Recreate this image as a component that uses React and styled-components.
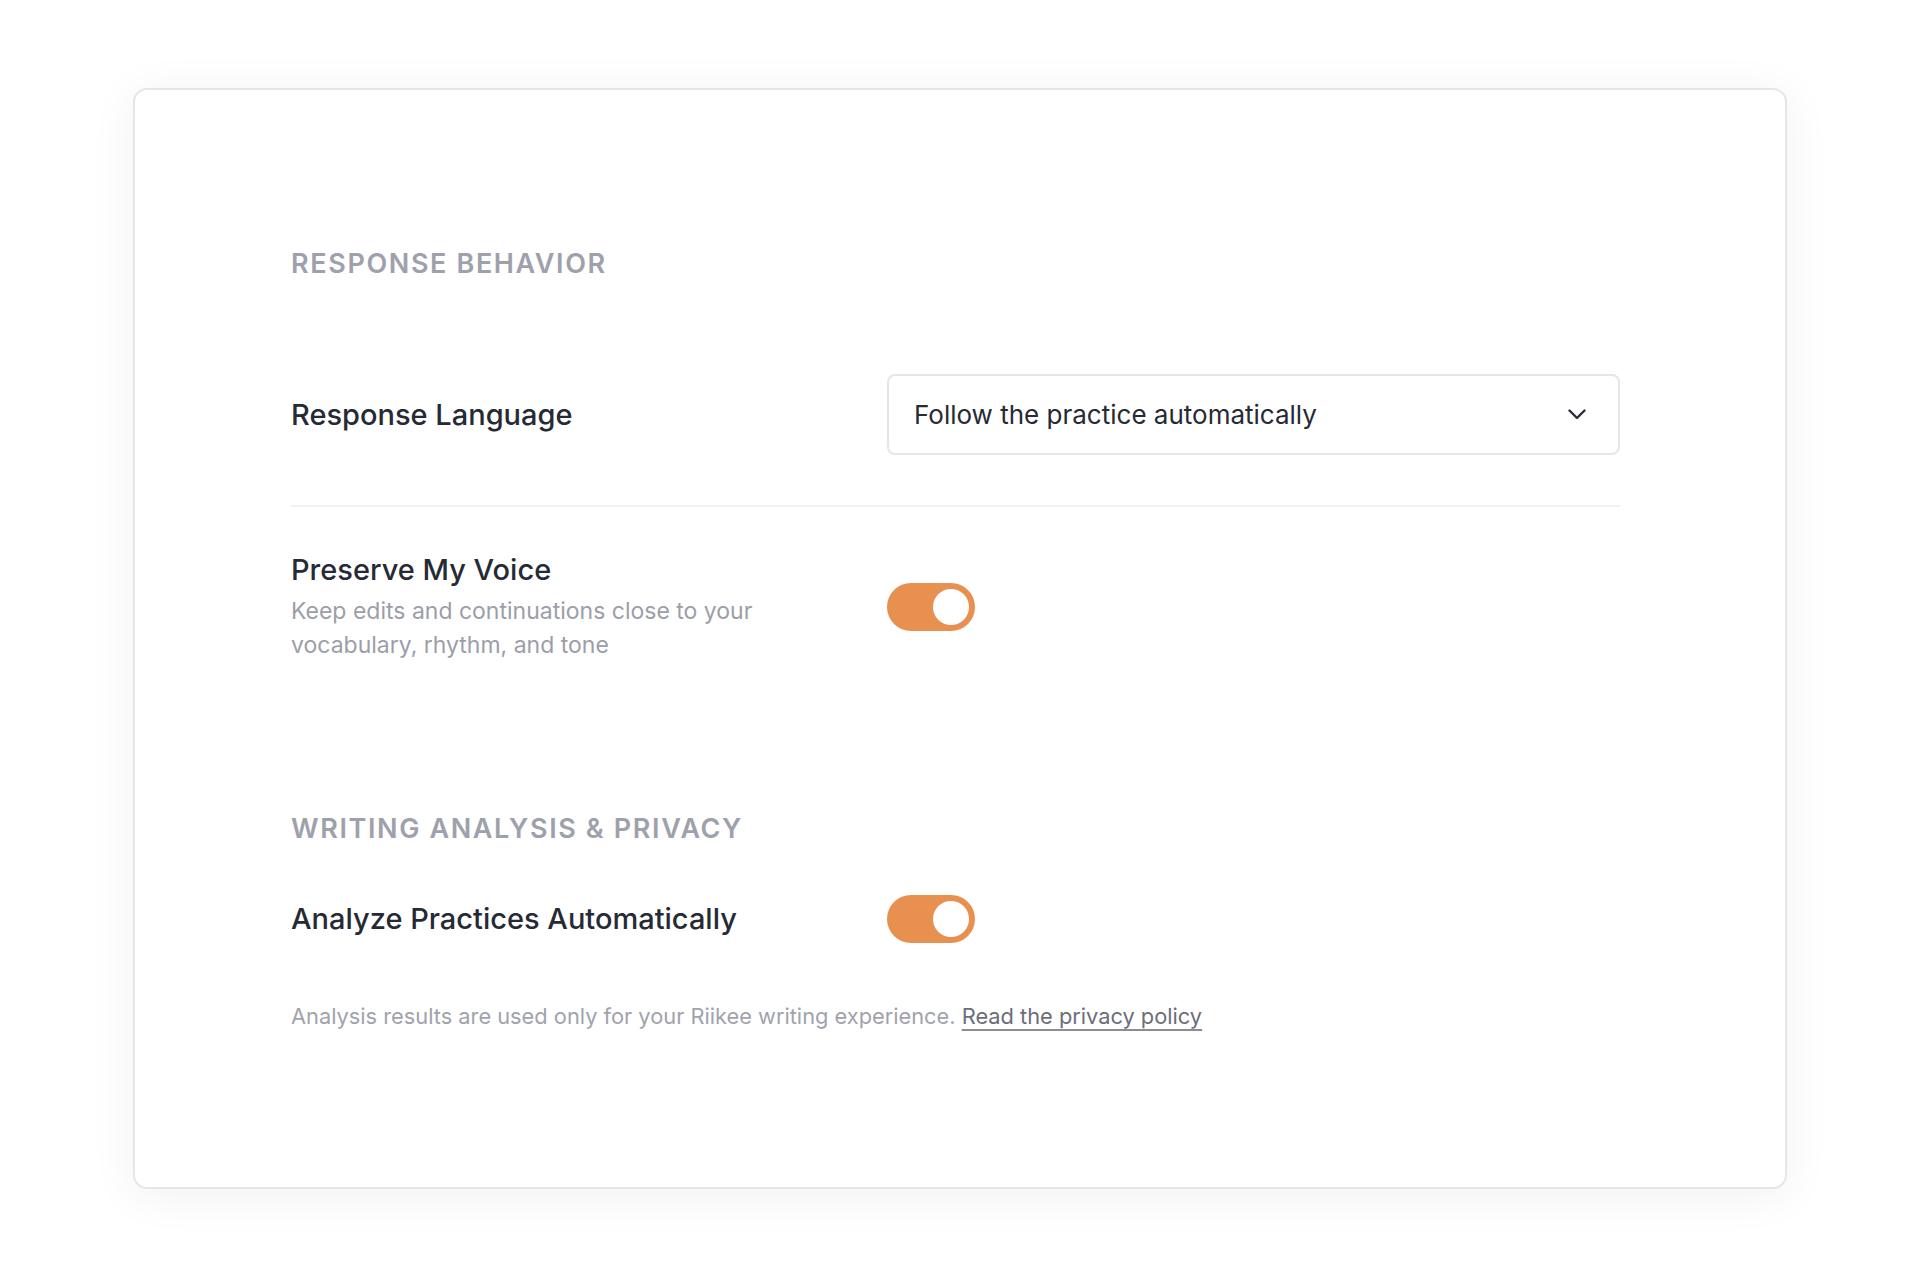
import { useState } from 'react';
import styled, { createGlobalStyle } from 'styled-components';

const GlobalStyle = createGlobalStyle`
  html, body {
    margin: 0;
    padding: 0;
    background: #ffffff;
  }
  body {
    font-family: Inter, "Noto Sans", "Liberation Sans", sans-serif;
    -webkit-font-smoothing: antialiased;
  }
  * {
    box-sizing: border-box;
  }
`;

const Toggle = ({ checked, onChange }) => (
  <Switch type="button" $on={checked} onClick={() => onChange(!checked)}>
    <Knob $on={checked} />
  </Switch>
);

const Chevron = () => (
  <svg width="18" height="11" viewBox="0 0 18 11" fill="none">
    <path
      d="M1.5 1.5L9 9L16.5 1.5"
      stroke="#2a2d36"
      strokeWidth="2.4"
      strokeLinecap="round"
      strokeLinejoin="round"
    />
  </svg>
);

const App = () => {
  const [preserveVoice, setPreserveVoice] = useState(true);
  const [autoAnalyze, setAutoAnalyze] = useState(true);

  return (
    <Page>
      <GlobalStyle />
      <Card>
        <Section>
          <SectionTitle>Response Behavior</SectionTitle>
          <Row $pad="48px 0 50px" $divider>
            <Label>Response Language</Label>
            <Select type="button">
              <span>Follow the practice automatically</span>
              <Chevron />
            </Select>
          </Row>
          <Row $pad="44px 0 52px">
            <div>
              <Label>Preserve My Voice</Label>
              <Description>
                Keep edits and continuations close to your vocabulary, rhythm, and tone
              </Description>
            </div>
            <Toggle checked={preserveVoice} onChange={setPreserveVoice} />
          </Row>
        </Section>

        <Section $spaced>
          <SectionTitle $tight>Writing Analysis &amp; Privacy</SectionTitle>
          <Row $pad="0">
            <Label>Analyze Practices Automatically</Label>
            <Toggle checked={autoAnalyze} onChange={setAutoAnalyze} />
          </Row>
          <Footnote>
            Analysis results are used only for your Riikee writing experience.{' '}
            <PolicyLink href="#">Read the privacy policy</PolicyLink>
          </Footnote>
        </Section>
      </Card>
    </Page>
  );
};

export default App;

const Page = styled.main`
  width: 1920px;
  min-height: 1280px;
  padding-top: 88px;
`;

const Card = styled.div`
  width: 1654px;
  margin: 0 auto;
  padding: 158px 165px 154px 156px;
  background: #ffffff;
  border: 2px solid #e6e6e9;
  border-radius: 14px;
  box-shadow: 0 6px 48px rgba(20, 20, 30, 0.06);
`;

const Section = styled.section`
  margin-top: ${(p) => (p.$spaced ? '99px' : '0')};
`;

const SectionTitle = styled.h2`
  margin: 0 0 ${(p) => (p.$tight ? '50px' : '46px')};
  font-size: 27px;
  line-height: 32px;
  font-weight: 600;
  letter-spacing: 0.06em;
  text-transform: uppercase;
  color: #9ea1ac;
`;

const Row = styled.div`
  display: grid;
  grid-template-columns: 596px 733px;
  align-items: center;
  padding: ${(p) => p.$pad || '48px 0'};
  border-bottom: ${(p) => (p.$divider ? '2px solid #f1f1f3' : 'none')};
`;

const Label = styled.div`
  font-size: 29px;
  line-height: 38px;
  font-weight: 500;
  color: #262a35;
`;

const Description = styled.p`
  margin: 5px 0 0;
  max-width: 520px;
  font-size: 23px;
  line-height: 34px;
  font-weight: 400;
  color: #9b9ea9;
`;

const Select = styled.button`
  display: flex;
  align-items: center;
  justify-content: space-between;
  width: 733px;
  height: 81px;
  padding: 0 32px 0 25px;
  background: #ffffff;
  border: 2px solid #e6e6e9;
  border-radius: 8px;
  font-family: inherit;
  font-size: 26px;
  font-weight: 400;
  color: #262a35;
  text-align: left;
  cursor: pointer;
`;

const Switch = styled.button`
  position: relative;
  width: 88px;
  height: 48px;
  padding: 0;
  border: none;
  border-radius: 24px;
  background: ${(p) => (p.$on ? '#e8904f' : '#d9d9de')};
  cursor: pointer;
`;

const Knob = styled.span`
  position: absolute;
  top: 6px;
  left: ${(p) => (p.$on ? '46px' : '6px')};
  width: 36px;
  height: 36px;
  border-radius: 50%;
  background: #ffffff;
  transition: left 0.15s ease;
`;

const Footnote = styled.p`
  margin: 56px 0 0;
  font-size: 21.8px;
  line-height: 34px;
  color: #a0a3ad;
`;

const PolicyLink = styled.a`
  color: #6b6e79;
  text-decoration: underline;
  text-decoration-color: #8a8d97;
  text-underline-offset: 5px;
  text-decoration-thickness: 2px;
`;
